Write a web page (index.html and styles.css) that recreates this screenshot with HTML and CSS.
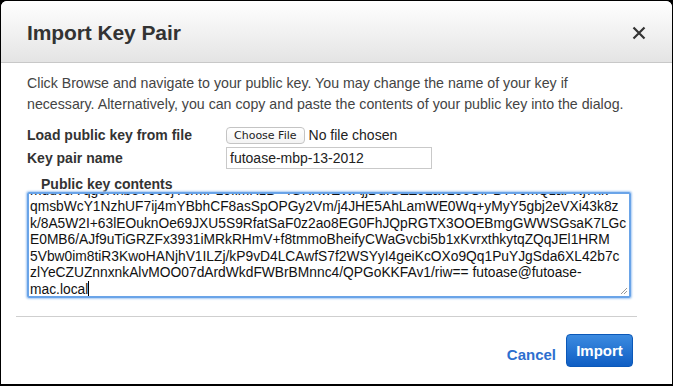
FILE: index.html
```html
<!DOCTYPE html>
<html>
<head>
<meta charset="utf-8">
<link rel="stylesheet" href="styles.css">
</head>
<body>
<div class="dialog">
  <div class="header">
    <h1 class="title">Import Key Pair</h1>
    <svg class="close" width="14" height="14" viewBox="0 0 14 14"><path d="M1.5 1.5 L12.5 12.5 M12.5 1.5 L1.5 12.5" stroke="#333" stroke-width="2.2" fill="none"/></svg>
  </div>
  <div class="body">
    <p class="intro">Click Browse and navigate to your public key. You may change the name of your key if necessary. Alternatively, you can copy and paste the contents of your public key into the dialog.</p>
    <div class="form">
      <div class="label">Load public key from file</div>
      <div class="file"><span class="choose">Choose File</span><span class="nofile">No file chosen</span></div>
      <div class="label">Key pair name</div>
      <div><span class="input">futoase-mbp-13-2012</span></div>
    </div>
    <div class="label pk">Public key contents</div>
    <div class="textarea">
      <div class="ta-text">
        <div class="ln">mduvc/TqgoRnbeV06ojYcrMr-L0fimHzB+4GHXwEWAjjDdIGZZ0Lav2o6OiPBTT0mQzaPNj7nk</div>
        <div class="ln">qmsbWcY1NzhUF7ij4mYBbhCF8asSpOPGy2Vm/j4JHE5AhLamWE0Wq+yMyY5gbj2eVXi43k8z</div>
        <div class="ln">k/8A5W2I+63lEOuknOe69JXU5S9RfatSaF0z2ao8EG0FhJQpRGTX3OOEBmgGWWSGsaK7LGc</div>
        <div class="ln">E0MB6/AJf9uTiGRZFx3931iMRkRHmV+f8tmmoBheifyCWaGvcbi5b1xKvrxthkytqZQqJEl1HRM</div>
        <div class="ln">5Vbw0im8tiR3KwoHANjhV1ILZj/kP9vD4LCAwfS7f2WSYyI4geiKcOXo9Qq1PuYJgSda6XL42b7c</div>
        <div class="ln">zlYeCZUZnnxnkAlvMOO07dArdWkdFWBrBMnnc4/QPGoKKFAv1/riw== futoase@futoase-</div>
        <div class="ln">mac.local<span class="caret"></span></div>
      </div>
      <svg class="grip" width="8" height="8" viewBox="0 0 8 8"><path d="M7 1 L1 7 M7 4 L4 7" stroke="#999" stroke-width="1"/></svg>
    </div>
  </div>
  <div class="divider"></div>
  <div class="footer">
    <span class="cancel">Cancel</span>
    <span class="import">Import</span>
  </div>
</div>
</body>
</html>
```

FILE: styles.css
```css
html, body {
  margin: 0;
  padding: 0;
  background: #000;
  height: 386px;
  overflow: hidden;
}
body {
  padding: 1px 1px 0 1px;
  box-sizing: border-box;
}
.dialog {
  width: 671px;
  height: 383px;
  background: #fff;
  border-radius: 6px 6px 0 0;
  font-family: "Liberation Sans", Arial, sans-serif;
  color: #444;
  display: flex;
  flex-direction: column;
  overflow: hidden;
}
.header {
  height: 59px;
  background: linear-gradient(#ffffff, #e4e4e4);
  border-bottom: 1px solid #c8c8c8;
  display: flex;
  align-items: center;
  justify-content: space-between;
  padding: 2px 26px 0 26px;
  flex-shrink: 0;
}
.title {
  margin: 0;
  font-size: 21px;
  letter-spacing: -0.1px;
  font-weight: bold;
  color: #333;
  padding-top: 1px;
}
.close {
  display: block;
  margin-top: 1px;
}
.body {
  padding: 10px 40px 0 26px;
}
.intro {
  margin: 0;
  font-size: 14.2px;
  line-height: 21px;
  color: #444;
  width: 600px;
}
.form {
  display: grid;
  grid-template-columns: 199px 1fr;
  grid-template-rows: 22px 23px;
  align-items: center;
  margin-top: 9px;
}
.label {
  font-size: 14px;
  font-weight: bold;
  color: #333;
}
.file {
  display: flex;
  align-items: center;
}
.choose {
  font-family: "DejaVu Sans", sans-serif;
  font-size: 11px;
  color: #222;
  border: 1px solid #c4c4c4;
  border-radius: 4px;
  background: linear-gradient(#fff, #f3f3f3);
  padding: 1px 7px;
  line-height: 13px;
}
.nofile {
  font-size: 14px;
  color: #222;
  margin-left: 4px;
}
.input {
  display: inline-block;
  width: 201px;
  height: 20px;
  border: 1px solid #c9c9c9;
  font-size: 14px;
  line-height: 20px;
  padding-left: 3px;
  box-sizing: content-box;
  color: #222;
}
.pk {
  padding-left: 14px;
  margin-top: 7px;
  line-height: 16px;
  height: 16px;
}
.textarea {
  position: relative;
  width: 598px;
  height: 102px;
  border: 2px solid #6aa4e8;
  box-shadow: 0 0 2px 1px #a9cbf3;
  border-radius: 2px;
  overflow: hidden;
  padding: 0 1px;
  color: #111;
}
.ta-text {
  font-size: 13.8px;
  line-height: 16.4px;
  margin-top: -11px;
}
.ln {
  white-space: nowrap;
}
.caret {
  display: inline-block;
  width: 1px;
  height: 16px;
  background: #000;
  vertical-align: -3px;
}
.grip {
  position: absolute;
  right: 1px;
  bottom: 1px;
}
.divider {
  height: 1px;
  background: #cfcfcf;
  margin: 18px 35px 0 15px;
}
.footer {
  display: flex;
  justify-content: flex-end;
  align-items: center;
  padding: 17px 39px 0 0;
}
.cancel {
  color: #2d6fcf;
  font-weight: bold;
  font-size: 15px;
  margin-right: 10px;
  margin-top: 7px;
}
.import {
  display: inline-block;
  width: 67px;
  height: 33px;
  line-height: 31px;
  text-align: center;
  box-sizing: border-box;
  color: #fff;
  font-weight: bold;
  font-size: 15px;
  border-radius: 4px;
  background: linear-gradient(#3c8be0, #0f5ec4);
  border: 1px solid #0b58b8;
}
```
